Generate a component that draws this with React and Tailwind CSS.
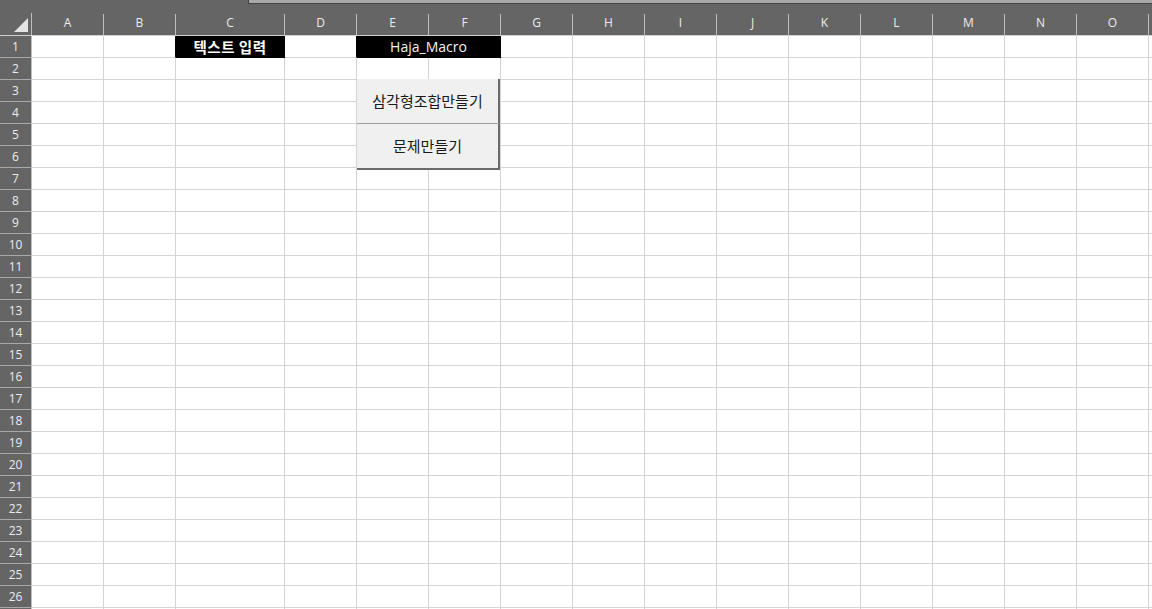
import React from "react";

const COLS = [
  { l: "A", w: 72 },
  { l: "B", w: 72 },
  { l: "C", w: 109 },
  { l: "D", w: 72 },
  { l: "E", w: 72 },
  { l: "F", w: 72 },
  { l: "G", w: 72 },
  { l: "H", w: 72 },
  { l: "I", w: 72 },
  { l: "J", w: 72 },
  { l: "K", w: 72 },
  { l: "L", w: 72 },
  { l: "M", w: 72 },
  { l: "N", w: 72 },
  { l: "O", w: 72 },
  { l: "", w: 72 },
];

const FONT = { fontFamily: '"Open Sans", "Noto Sans CJK KR", sans-serif' };
const KFONT = { fontFamily: '"Noto Sans CJK KR", "Noto Sans", sans-serif' };

function HeaderRow() {
  return (
    <div className="flex h-[32px] shrink-0 border-b border-[#d0d0d0] bg-[#656565]">
      <div className="flex h-full w-[32px] shrink-0 items-end">
        <div className="flex h-[22px] w-full items-end justify-end border-r border-[#bdbdbd] pb-[3px] pr-[3px]">
          <svg width="14" height="14" viewBox="0 0 14 14">
            <polygon points="0,14 14,14 14,0" fill="#e4e4e4" />
          </svg>
        </div>
      </div>
      {COLS.map((c, i) => (
        <div
          key={i}
          className="flex h-full shrink-0 items-end"
          style={{ width: c.w }}
        >
          <div className="flex h-[21px] w-full items-center justify-center border-r border-[#bdbdbd] pb-[4px] text-[12px] text-[#ececec]">
            {c.l}
          </div>
        </div>
      ))}
    </div>
  );
}

function Row({ n }) {
  return (
    <div className="flex h-[22px] shrink-0">
      <div className="flex h-full w-[32px] shrink-0 items-center justify-center border-b border-r border-b-[#a9a9a9] border-r-[#bdbdbd] bg-[#656565] text-[12px] text-[#ececec]">
        {n <= 26 ? n : ""}
      </div>
      {COLS.map((c, i) => {
        if (n === 1 && c.l === "C") {
          return (
            <div
              key={i}
              className="flex h-full shrink-0 items-center justify-center border-b border-r border-black bg-black text-[14.5px] font-bold tracking-[0.5px] text-white"
              style={{ width: c.w, ...KFONT }}
            >
              텍스트 입력
            </div>
          );
        }
        if (n === 1 && c.l === "E") {
          return (
            <div
              key={i}
              className="flex h-full w-[144px] shrink-0 items-center justify-center border-b border-r border-black bg-black pb-[1px] text-[14px] text-[#f2f2f2]"
            >
              Haja_Macro
            </div>
          );
        }
        if (n === 1 && c.l === "F") return null;
        const blackRight = n === 1 && (c.l === "B" || c.l === "D");
        return (
          <div
            key={i}
            className={
              "h-full shrink-0 border-b border-r border-b-[#d4d4d4] " +
              (blackRight ? "border-r-black" : "border-r-[#d4d4d4]")
            }
            style={{ width: c.w }}
          />
        );
      })}
    </div>
  );
}

export default function App() {
  const rows = Array.from({ length: 27 }, (_, i) => i + 1);
  return (
    <div
      className="relative h-[609px] w-[1152px] overflow-hidden bg-white"
      style={FONT}
    >
      <div className="flex h-[4px] bg-[#656565]">
        <div className="w-[248px] shrink-0" />
        <div className="flex-1 border-b border-l border-[#444444] bg-[#a8a8a8]" />
      </div>
      <HeaderRow />
      {rows.map((n) => (
        <Row key={n} n={n} />
      ))}

      <div className="absolute left-[357px] top-[79px] flex w-[143px] flex-col" style={KFONT}>
        <div className="flex h-[45px] items-center justify-center border-b border-r-2 border-b-[#a0a0a0] border-r-[#6b6b6b] bg-[#f0f0f0] text-[15px] text-[#1a1a1a]">
          삼각형조합만들기
        </div>
        <div className="flex h-[46px] items-center justify-center border-b-2 border-r-2 border-[#6b6b6b] bg-[#f0f0f0] text-[15px] text-[#1a1a1a]">
          문제만들기
        </div>
      </div>
    </div>
  );
}
